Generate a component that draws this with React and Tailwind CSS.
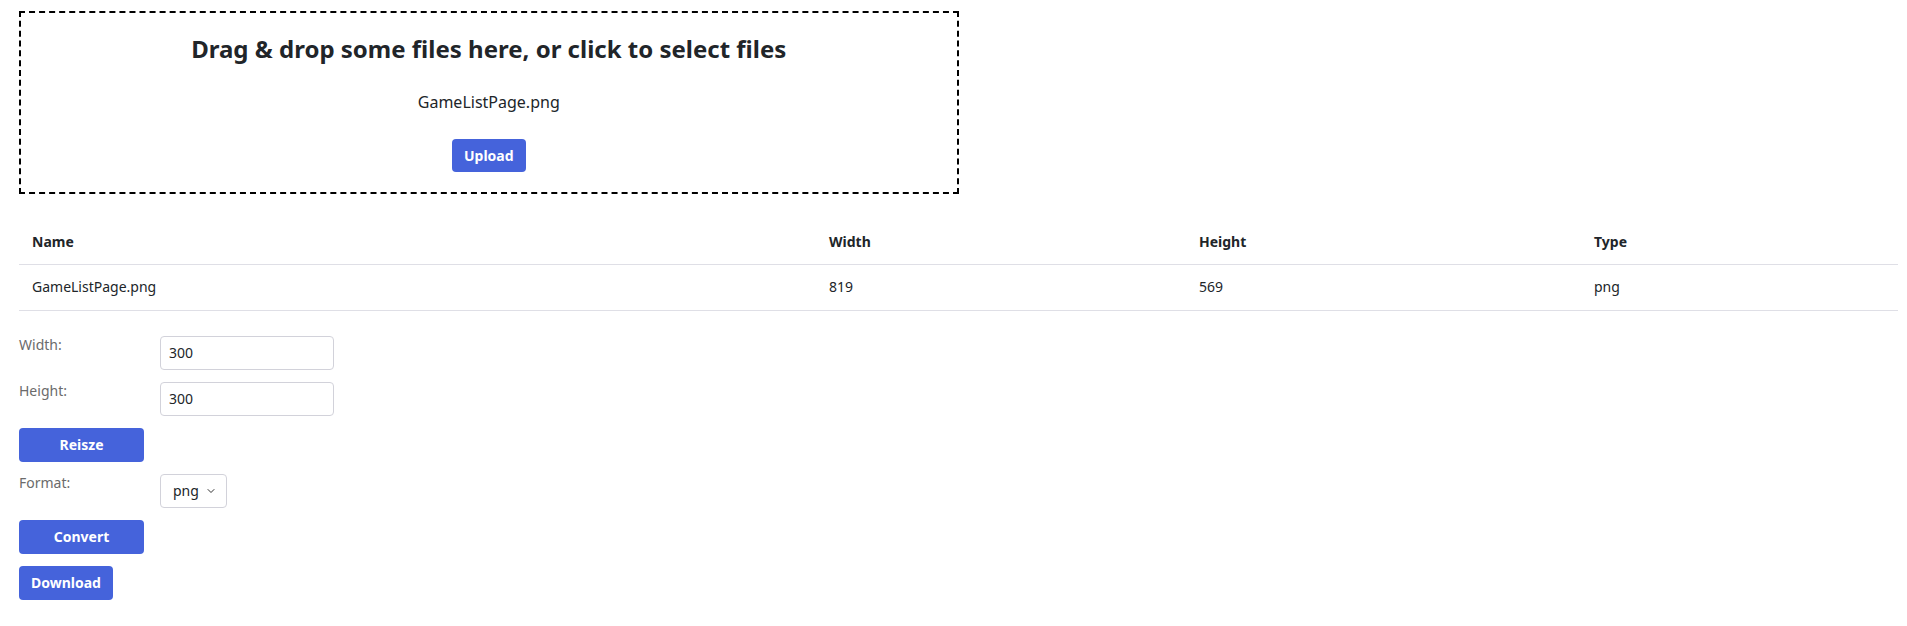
import { ChevronDown } from "lucide-react";

const FONT = "font-['Noto_Sans',_'Open_Sans',_sans-serif]";

function Btn({ children, className = "" }) {
  return (
    <button
      className={`h-[34px] rounded bg-[#4563db] text-sm font-bold text-white ${className}`}
    >
      {children}
    </button>
  );
}

function Field({ label, children }) {
  return (
    <div className="flex items-start">
      <label className="w-[141px] -mt-px text-sm leading-5 text-[#6b6b6b]">{label}</label>
      {children}
    </div>
  );
}

export default function App() {
  const files = [{ name: "GameListPage.png", width: 819, height: 569, type: "png" }];

  return (
    <div className={`${FONT} min-h-screen bg-white pl-[19px] pr-[9px] pt-[11px] text-[#212529]`}>
      {/* drop zone */}
      <div className="flex w-1/2 flex-col items-center gap-[25px] border-2 border-dashed border-black p-5">
        <h2 className="text-2xl leading-8 font-bold">
          Drag &amp; drop some files here, or click to select files
        </h2>
        <p className="text-base leading-6">GameListPage.png</p>
        <button className="h-[33px] rounded bg-[#4563db] px-3 text-sm font-bold text-white">
          Upload
        </button>
      </div>

      {/* file table */}
      <table className="mt-[26px] w-full border-collapse text-left text-sm">
        <thead>
          <tr className="border-b border-[#dfdfe6]">
            <th className="h-[44px] w-[797px] px-[13px] font-bold">Name</th>
            <th className="h-[44px] w-[370px] px-[13px] font-bold">Width</th>
            <th className="h-[44px] w-[395px] px-[13px] font-bold">Height</th>
            <th className="h-[44px] px-[13px] font-bold">Type</th>
          </tr>
        </thead>
        <tbody>
          {files.map((f) => (
            <tr key={f.name} className="border-b border-[#dfdfe6]">
              <td className="h-[46px] px-[13px]">{f.name}</td>
              <td className="h-[46px] px-[13px]">{f.width}</td>
              <td className="h-[46px] px-[13px]">{f.height}</td>
              <td className="h-[46px] px-[13px]">{f.type}</td>
            </tr>
          ))}
        </tbody>
      </table>

      {/* resize / convert form */}
      <div className="mt-[25px] flex flex-col items-start gap-3">
        <Field label="Width:">
          <input
            defaultValue="300"
            className="h-[34px] w-[174px] rounded border border-[#d2d2da] px-2 text-sm outline-none"
          />
        </Field>
        <Field label="Height:">
          <input
            defaultValue="300"
            className="h-[34px] w-[174px] rounded border border-[#d2d2da] px-2 text-sm outline-none"
          />
        </Field>
        <Btn className="w-[125px]">Reisze</Btn>
        <Field label="Format:">
          <div className="flex h-[34px] w-[67px] items-center gap-1.5 rounded border border-[#d2d2da] pl-[12px] text-sm">
            png
            <ChevronDown className="h-3 w-3 text-[#333]" strokeWidth={2} />
          </div>
        </Field>
        <Btn className="w-[125px]">Convert</Btn>
        <Btn className="px-3">Download</Btn>
      </div>
    </div>
  );
}
